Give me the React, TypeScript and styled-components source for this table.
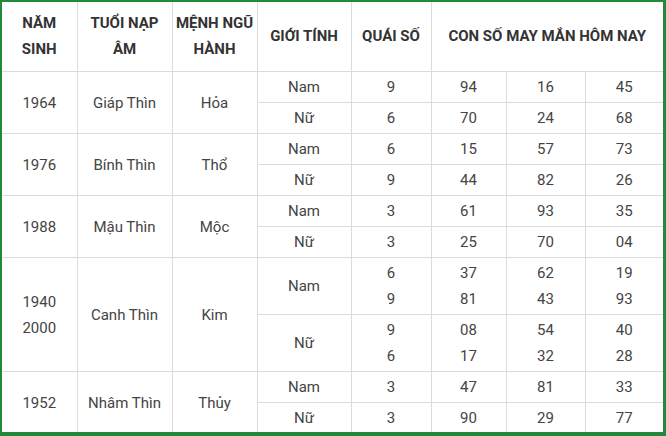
import styled, { createGlobalStyle } from 'styled-components';

// data
interface Gender {
  label: string;
  quai: string[];
  numbers: string[][];
}

interface YearRow {
  years: string[];
  tuoi: string;
  menh: string;
  genders: Gender[];
}

const rows: YearRow[] = [
  {
    years: ['1964'],
    tuoi: 'Giáp Thìn',
    menh: 'Hỏa',
    genders: [
      { label: 'Nam', quai: ['9'], numbers: [['94'], ['16'], ['45']] },
      { label: 'Nữ', quai: ['6'], numbers: [['70'], ['24'], ['68']] },
    ],
  },
  {
    years: ['1976'],
    tuoi: 'Bính Thìn',
    menh: 'Thổ',
    genders: [
      { label: 'Nam', quai: ['6'], numbers: [['15'], ['57'], ['73']] },
      { label: 'Nữ', quai: ['9'], numbers: [['44'], ['82'], ['26']] },
    ],
  },
  {
    years: ['1988'],
    tuoi: 'Mậu Thìn',
    menh: 'Mộc',
    genders: [
      { label: 'Nam', quai: ['3'], numbers: [['61'], ['93'], ['35']] },
      { label: 'Nữ', quai: ['3'], numbers: [['25'], ['70'], ['04']] },
    ],
  },
  {
    years: ['1940', '2000'],
    tuoi: 'Canh Thìn',
    menh: 'Kim',
    genders: [
      {
        label: 'Nam',
        quai: ['6', '9'],
        numbers: [
          ['37', '81'],
          ['62', '43'],
          ['19', '93'],
        ],
      },
      {
        label: 'Nữ',
        quai: ['9', '6'],
        numbers: [
          ['08', '17'],
          ['54', '32'],
          ['40', '28'],
        ],
      },
    ],
  },
  {
    years: ['1952'],
    tuoi: 'Nhâm Thìn',
    menh: 'Thủy',
    genders: [
      { label: 'Nam', quai: ['3'], numbers: [['47'], ['81'], ['33']] },
      { label: 'Nữ', quai: ['3'], numbers: [['90'], ['29'], ['77']] },
    ],
  },
];

const colWidths = [75, 95, 85, 94, 80, 75, 79, 78];

function Lines({ items }: { items: string[] }) {
  return (
    <>
      {items.map((t, i) => (
        <Line key={i}>{t}</Line>
      ))}
    </>
  );
}

function App() {
  return (
    <>
      <GlobalStyle />
      <Frame>
        <Table>
          <colgroup>
            {colWidths.map((w, i) => (
              <col key={i} style={{ width: w }} />
            ))}
          </colgroup>
          <thead>
            <tr>
              <Th>
                NĂM
                <br />
                SINH
              </Th>
              <Th>
                TUỔI NẠP
                <br />
                ÂM
              </Th>
              <Th>
                MỆNH NGŨ
                <br />
                HÀNH
              </Th>
              <Th>GIỚI TÍNH</Th>
              <Th>QUÁI SỐ</Th>
              <Th colSpan={3}>CON SỐ MAY MẮN HÔM NAY</Th>
            </tr>
          </thead>
          <tbody>
            {rows.map((row) =>
              row.genders.map((g, gi) => (
                <tr key={row.tuoi + g.label}>
                  {gi === 0 && (
                    <>
                      <Td rowSpan={row.genders.length}>
                        <Lines items={row.years} />
                      </Td>
                      <Td rowSpan={row.genders.length}>{row.tuoi}</Td>
                      <Td rowSpan={row.genders.length}>{row.menh}</Td>
                    </>
                  )}
                  <Td>{g.label}</Td>
                  <Td>
                    <Lines items={g.quai} />
                  </Td>
                  {g.numbers.map((n, ni) => (
                    <Td key={ni}>
                      <Lines items={n} />
                    </Td>
                  ))}
                </tr>
              ))
            )}
          </tbody>
        </Table>
      </Frame>
    </>
  );
}

export default App;

const GlobalStyle = createGlobalStyle`
  html, body {
    margin: 0;
    padding: 0;
    background: #ffffff;
  }
  body {
    font-family: Roboto, "Noto Sans", Arial, sans-serif;
  }
`;

const Frame = styled.div`
  width: 666px;
  height: 436px;
  box-sizing: border-box;
  border-style: solid;
  border-color: #22883a;
  border-width: 2px 3px 4px 2px;
  background: #ffffff;
  overflow: hidden;
`;

const Table = styled.table`
  width: 661px;
  table-layout: fixed;
  border-collapse: collapse;
  border-style: hidden;
`;

const Th = styled.th`
  border: 1px solid #dcdcdc;
  padding: 8px 2px 9px;
  line-height: 26px;
  font-size: 15px;
  font-weight: 700;
  color: #333333;
  text-align: center;
  vertical-align: middle;
  white-space: nowrap;
`;

const Td = styled.td`
  border: 1px solid #dcdcdc;
  padding: 2px 2px;
  line-height: 26px;
  font-size: 15px;
  font-weight: 400;
  color: #444444;
  text-align: center;
  vertical-align: middle;
`;

const Line = styled.span`
  display: block;
`;
